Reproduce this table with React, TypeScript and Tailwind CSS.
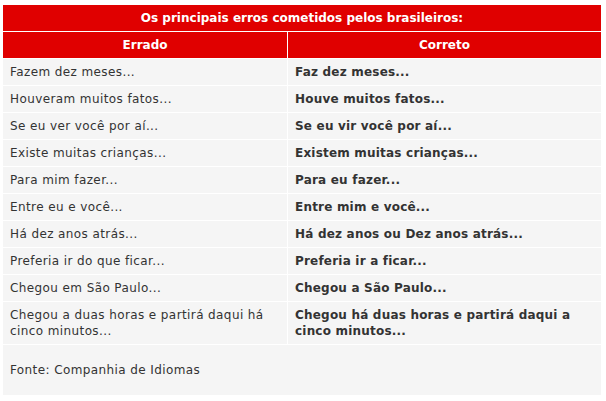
import React from 'react';

const rows: [string, string][] = [
  ['Fazem dez meses...', 'Faz dez meses...'],
  ['Houveram muitos fatos...', 'Houve muitos fatos...'],
  ['Se eu ver você por aí...', 'Se eu vir você por aí...'],
  ['Existe muitas crianças...', 'Existem muitas crianças...'],
  ['Para mim fazer...', 'Para eu fazer...'],
  ['Entre eu e você...', 'Entre mim e você...'],
  ['Há dez anos atrás...', 'Há dez anos ou Dez anos atrás...'],
  ['Preferia ir do que ficar...', 'Preferia ir a ficar...'],
  ['Chegou em São Paulo...', 'Chegou a São Paulo...'],
  ['Chegou a duas horas e partirá daqui há cinco minutos...', 'Chegou há duas horas e partirá daqui a cinco minutos...'],
];

export default function App() {
  return (
    <div className="w-[606px] h-[401px] bg-white pt-[5px] pl-[3px] font-['DejaVu_Sans',Verdana,sans-serif] text-[12px] leading-[16px] text-[#333]">
      <div className="w-[598px] flex flex-col gap-px bg-white">
        {/* Title */}
        <div className="h-[26px] bg-[#e00000] text-white font-bold flex items-center justify-center">
          Os principais erros cometidos pelos brasileiros:
        </div>

        {/* Header */}
        <div className="grid grid-cols-[284px_313px] gap-px">
          <div className="h-[26px] bg-[#e00000] text-white font-bold flex items-center justify-center">Errado</div>
          <div className="h-[26px] bg-[#e00000] text-white font-bold flex items-center justify-center">Correto</div>
        </div>

        {/* Body */}
        {rows.map(([wrong, right]) => (
          <div key={wrong} className="grid grid-cols-[284px_313px] gap-px">
            <div className="bg-[#f5f5f5] px-[7px] py-[5px] tracking-[0.4px]">{wrong}</div>
            <div className="bg-[#f5f5f5] px-[7px] py-[5px] font-bold tracking-[0.2px]">{right}</div>
          </div>
        ))}

        {/* Footer */}
        <div className="h-[50px] bg-[#f5f5f5] px-[7px] flex items-center tracking-[0.4px]">
          Fonte: Companhia de Idiomas
        </div>
      </div>
    </div>
  );
}
